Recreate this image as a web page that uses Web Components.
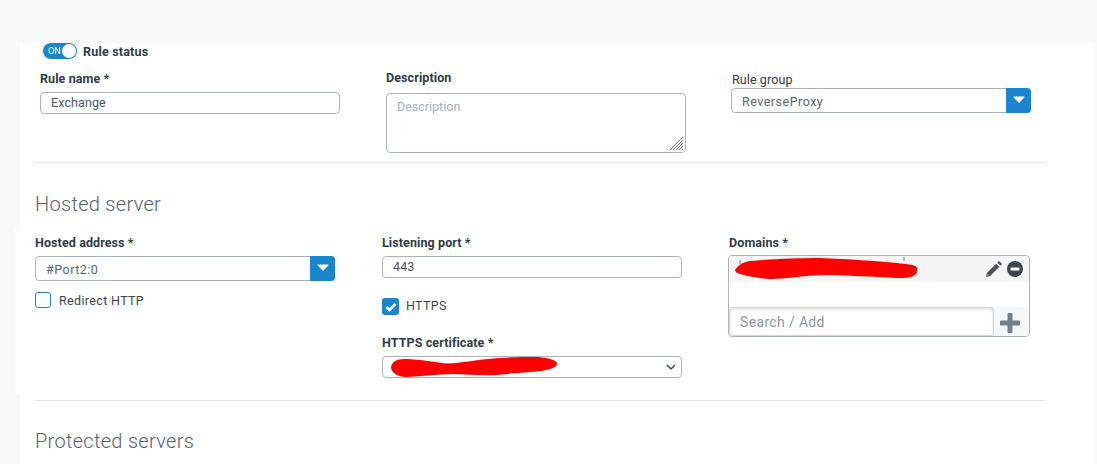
<!DOCTYPE html>
<html><head><meta charset="utf-8"><style>
html,body{margin:0;padding:0;height:464px;overflow:hidden;background:#f9f9f9;font-family:Roboto,"Liberation Sans",sans-serif;color:#3b4754}
</style></head><body>
<x-page>
<x-panel style="margin-left:20px;margin-top:43px;height:186px">
  <x-toggle style="margin-left:23px">Rule status</x-toggle>
  <x-row style="--cols:300px 300px 300px;--gap:46px;padding-left:20px;height:0">
    <x-field label="Rule name *" strong style="--top:12px;--g:5px"><x-input value="Exchange"></x-input></x-field>
    <x-field label="Description" strong style="--top:11px;--g:7px"><x-textarea placeholder="Description"></x-textarea></x-field>
    <x-field label="Rule group" style="--top:13px;--g:0px;margin-left:-1px;margin-right:1px;--lx:1px"><x-select value="ReverseProxy"></x-select></x-field>
  </x-row>
  <x-divider style="margin:103px 0 0 15px"></x-divider>
  <x-heading style="margin:29px 0 0 15px">Hosted server</x-heading>
</x-panel>
<x-panel style="margin-left:15px;height:164px">
  <x-row style="--cols:300px 300px 302px;--gap:47px;padding-left:20px">
    <x-field label="Hosted address *" strong style="--top:6px;--g:5px">
      <x-select value="#Port2:0"></x-select>
      <x-check style="margin-top:11px;--tp:2px">Redirect HTTP</x-check>
    </x-field>
    <x-field label="Listening port *" strong style="--top:6px;--g:5px">
      <x-input value="443"></x-input>
      <x-check checked style="margin-top:20px;--bp:2px">HTTPS</x-check>
      <x-field label="HTTPS certificate *" strong style="--top:20px;--g:5px"><x-plain-select></x-plain-select></x-field>
    </x-field>
    <x-field label="Domains *" strong style="--top:6px;--g:4px;margin-left:-1px;margin-right:1px;--lx:1px"><x-domains></x-domains></x-field>
  </x-row>
</x-panel>
<x-panel style="margin-left:20px;height:72px;box-sizing:border-box;padding-top:7px">
  <x-divider style="margin:0 0 0 15px"></x-divider>
  <x-heading style="margin:28px 0 0 15px">Protected servers</x-heading>
</x-panel>
</x-page>
<script>
const def=(n,html)=>{customElements.define(n,class extends HTMLElement{
  connectedCallback(){ if(this.shadowRoot)return; const s=this.attachShadow({mode:'open'}); s.innerHTML=typeof html==='function'?html(this):html; }
});};
const esc=s=>(s||'').replace(/&/g,'&amp;').replace(/</g,'&lt;');
const caret=`<svg width="12" height="7" viewBox="0 0 12 7"><path d="M1 .5h10a.6.6 0 0 1 .4 1L6.400 6.500a.6.6 0 0 1-.8 0L.6 1.500a.6.6 0 0 1 .4-1z" fill="#fff"/></svg>`;
def('x-page',`<style>:host{display:block}</style><slot></slot>`);
def('x-panel',`<style>:host{display:block;background:#fff;margin-right:3px}</style><slot></slot>`);
def('x-row',`<style>:host{display:grid;grid-template-columns:var(--cols);column-gap:var(--gap);align-items:start}</style><slot></slot>`);
def('x-divider',`<style>:host{display:block;width:1010px;height:1px;background:#e4e5e7}</style>`);
def('x-heading',`<style>:host{display:block;font:300 20px/24px Roboto,sans-serif;color:#56616d;letter-spacing:.3px}</style><slot></slot>`);
def('x-field',el=>`<style>:host{display:block;padding-top:var(--top,0)}
 .l{font:${el.hasAttribute('strong')?'700':'400'} 12.5px/16px Roboto,sans-serif;color:#2f3b49;margin-bottom:var(--g,6px);padding-left:var(--lx,0);white-space:nowrap;letter-spacing:.1px}</style>
 <div class="l">${esc(el.getAttribute('label'))}</div><slot></slot>`);
const box=`box-sizing:border-box;border:1px solid #adb3ba;border-radius:4px;background:#fff;`;
def('x-input',el=>`<style>:host{display:block}.b{${box}height:22px;padding-left:10px;font:400 12.5px/20px Roboto,sans-serif;color:#4a5561;letter-spacing:.1px}</style><div class="b">${esc(el.getAttribute('value'))}</div>`);
def('x-textarea',el=>`<style>:host{display:block}.b{${box}height:60px;padding:5px 10px;font:400 12.5px/16px Roboto,sans-serif;color:#9fb0c0;display:flex;flex-direction:column}
 svg{margin:auto -9px -4px auto;display:block;flex:none}.t{flex:1}</style><div class="b"><div class="t">${esc(el.getAttribute('placeholder'))}</div>
 <svg width="15" height="15" viewBox="0 0 15 15" stroke="#777" stroke-width="1"><path d="M1 14L14 1M4 14L14 4M7 14L14 7M10 14l4-4M13 14l1-1"/></svg></div>`);
def('x-select',el=>`<style>:host{display:block}.b{${box}height:25px;display:flex;align-items:stretch;font:400 12.5px/25px Roboto,sans-serif;color:#5a6470;letter-spacing:.5px}
 .v{flex:1;padding-left:10px}.c{width:25px;margin:-1px;background:#1a85cd;border-radius:0 4px 4px 0;display:flex;justify-content:center;padding-top:8px;box-sizing:border-box;height:25px}svg{display:block}</style>
 <div class="b"><div class="v">${esc(el.getAttribute('value'))}</div><div class="c">${caret}</div></div>`);
def('x-plain-select',`<style>:host{display:block}.b{${box}height:22px;display:flex;align-items:center;justify-content:space-between;padding:0 5px 0 8px}svg{display:block;overflow:visible}</style>
 <div class="b"><svg width="167" height="21" viewBox="0 0 167 21"><path d="M0 10C1 5 5 2 14 2C30 2 45 6 57 6.500C70 6 85 3 97 2C115 0 135 0 147 0C158 1 166 3 166 7C166 11 155 14 140 15C125 16 115 17 105 18C90 19 75 17 63 17C45 17 28 20 14 20C5 19 0 15 0 10Z" fill="#fe0000"/></svg>
 <svg width="10" height="6" viewBox="0 0 10 6" fill="none" stroke="#3d4650" stroke-width="1.500"><path d="M1 1l4 4 4-4"/></svg></div>`);
def('x-check',el=>{const on=el.hasAttribute('checked');return `<style>:host{display:flex;height:${on?17:16}px;align-items:center;gap:${on?7:8}px;font:400 12.5px/16px Roboto,sans-serif;color:#3b4754;letter-spacing:.35px}
 .x{padding:var(--tp,0) 0 var(--bp,0)}
 .k{box-sizing:border-box;width:${on?17:16}px;height:${on?17:16}px;border-radius:3px;border:${on?'0':'1.5px solid #1a85cd'};background:${on?'#1a85cd':'#fff'};display:flex;align-items:center;justify-content:center}</style>
 <div class="k">${on?'<svg width="12" height="10" viewBox="0 0 12 10"><path d="M1.500 5l3 3 6-6" fill="none" stroke="#fff" stroke-width="2.600"/></svg>':''}</div><div class="x"><slot></slot></div>`});
def('x-toggle',`<style>:host{display:flex;height:16px;align-items:center;gap:6px;font:700 12.5px/16px Roboto,sans-serif;color:#2f3b49;letter-spacing:.2px}
 .x{padding-top:2px}
 .t{box-sizing:border-box;width:34px;height:16px;border-radius:8px;background:#1a85cd;display:flex;align-items:center;justify-content:space-between;padding:0 1px 0 5px;font:400 9px/16px Roboto,sans-serif;color:#fff;letter-spacing:0}
 .d{width:14px;height:14px;border-radius:50%;background:#fff}</style><div class="t"><span>ON</span><span class="d"></span></div><div class="x"><slot></slot></div>`);
def('x-domains',`<style>:host{display:block}.b{${box}height:82px;display:flex;flex-direction:column;overflow:hidden}
 .r{height:26px;flex:none;background:#f5f5f6;display:flex;align-items:flex-start;padding:2px 6px 0 6px;box-sizing:border-box}
 .m{flex:1}.ic{display:flex;gap:5px;align-items:center;margin-top:3px}svg{display:block;flex:none}
 .a{height:29px;flex:none;background:#f5f6f7;display:flex}
 .s{box-sizing:border-box;width:265px;height:29px;border:1px solid #d5d8db;border-radius:3px;background:#fff;box-shadow:inset 0 1px 3px rgba(0,0,0,.18);padding:0 10px;font:400 14px/29px Roboto,sans-serif;color:#8e98a3;letter-spacing:.35px}
 .p{margin:6px 0 0 6px}</style>
 <div class="b"><div class="r"><svg width="182" height="21" viewBox="0 0 182 21" style="overflow:visible"><path d="M5 2l0 4M169 -1v4" stroke="#778" stroke-width="1"/><path d="M0 12C3 7 8 4 15 3C40 1 60 0 85 0C115 1 140 3 162 5C172 6 182 7 182 10C182 14 182 16 180 17C175 20 170 20 162 20C140 19 110 17 85 17C65 18 50 21 35 21C22 20 12 18 5 16C2 15 0 14 0 12Z" fill="#fe0000"/></svg><span class="m"></span>
 <span class="ic"><svg width="16" height="16" viewBox="1 .5 15 15"><path d="M10.500 3l3 3L5 14.500 1 15.500l1-4z" fill="#4f5358"/><path d="M11.500 2l1-1a1 1 0 0 1 1.300 0l1.700 1.700a1 1 0 0 1 0 1.300l-1 1z" fill="#4f5358"/><path d="M2 11.500L1 15.500l4-1z" fill="#8a6f55"/></svg>
 <svg width="16" height="16" viewBox="0 0 16 16"><circle cx="8" cy="8" r="8" fill="#3c4550"/><rect x="3.500" y="6.500" width="9" height="3" rx=".5" fill="#fff"/></svg></span></div>
 <div class="m"></div>
 <div class="a"><div class="s">Search / Add</div><svg class="p" width="20" height="20" viewBox="0 0 20 20"><path d="M7.500 1a1 1 0 0 1 1-1h3a1 1 0 0 1 1 1v6.500H19a1 1 0 0 1 1 1v3a1 1 0 0 1-1 1h-6.500V19a1 1 0 0 1-1 1h-3a1 1 0 0 1-1-1v-6.500H1a1 1 0 0 1-1-1v-3a1 1 0 0 1 1-1h6.500z" fill="#6f7f8e"/></svg></div></div>`);
</script>
</body></html>
